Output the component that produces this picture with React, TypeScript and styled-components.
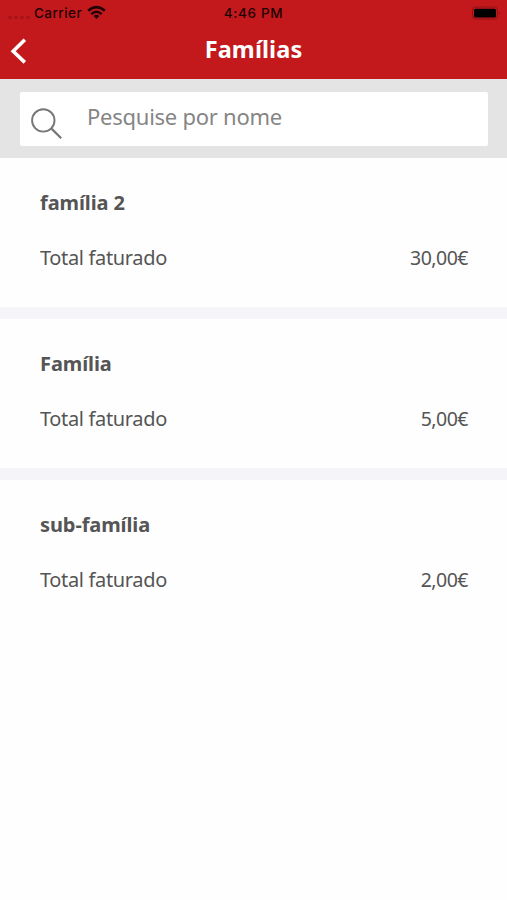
import React from 'react';
import styled, { createGlobalStyle } from 'styled-components';

const GlobalStyle = createGlobalStyle`
  * { box-sizing: border-box; }
  body { margin: 0; background: #fff; font-family: "Noto Sans", "Open Sans", sans-serif; }
  h1, h2, p { margin: 0; }
`;

const Screen = styled.div`
  display: flex;
  flex-direction: column;
  height: 900px;
  background: #fefefe;
  overflow: hidden;
`;

const Header = styled.header`
  height: 79px;
  background: #c3191c;
  flex: none;
`;

const StatusBar = styled.div`
  display: grid;
  grid-template-columns: 1fr auto 1fr;
  align-items: center;
  height: 26px;
  padding: 0 6px 0 8px;
  font: 500 13.5px/26px Inter, sans-serif;
  color: #210305;
`;

const Carrier = styled.div`
  display: flex;
  align-items: center;
  letter-spacing: 0.45px;
`;

const Signal = styled.div`
  display: flex;
  gap: 2px;
  width: 26px;
  padding-top: 9px;
`;

const Dot = styled.span`
  width: 4px;
  height: 3px;
  border-radius: 2px;
  background: #a51518;
`;

const WifiIcon = styled.svg`
  width: 19px;
  height: 15px;
  margin: -1px 0 0 5px;
`;

const Clock = styled.span`
  margin-right: 2px;
  letter-spacing: 0.65px;
`;

const BatteryIcon = styled.svg`
  width: 30px;
  height: 14px;
  justify-self: end;
`;

const TitleBar = styled.div`
  display: grid;
  grid-template-columns: 40px 1fr 40px;
  align-items: center;
  height: 48px;
`;

const BackButton = styled.button`
  display: flex;
  padding: 1px 0 0 10px;
  border: 0;
  background: none;
`;

const Title = styled.h1`
  text-align: center;
  color: #fff;
  font-size: 23.5px;
  line-height: 48px;
  font-weight: 700;
  letter-spacing: 0.1px;
  margin-top: -2px;
`;

const SearchArea = styled.div`
  height: 79px;
  padding: 13px 19px 12px 20px;
  background: #e4e4e4;
  flex: none;
`;

const SearchField = styled.label`
  display: flex;
  height: 54px;
  border-radius: 2px;
  background: #fff;
`;

const SearchIcon = styled.svg`
  width: 34px;
  height: 34px;
  margin: 15px 0 0 10px;
  flex: none;
`;

const SearchInput = styled.input`
  flex: 1;
  min-width: 0;
  height: 48px;
  margin-left: 23px;
  padding: 0;
  border: 0;
  outline: 0;
  background: transparent;
  font: 400 22px/48px "Noto Sans", sans-serif;
  letter-spacing: -0.25px;
  &::placeholder { color: #858585; opacity: 1; }
`;

const List = styled.main`
  display: flex;
  flex-direction: column;
`;

const Card = styled.section`
  height: 161px;
  padding: 30px 39px 0 40px;
  color: #555;
  border-bottom: 12px solid #f4f4f9;
  &:last-child { border-bottom-color: transparent; }
`;

const Name = styled.h2`
  font-size: 20px;
  line-height: 30px;
  font-weight: 700;
  letter-spacing: -0.1px;
`;

const Total = styled.div`
  display: flex;
  justify-content: space-between;
  margin-top: 25px;
  line-height: 30px;
`;

const Label = styled.span`
  font-size: 20px;
  letter-spacing: -0.35px;
`;

const Amount = styled.span`
  font-size: 19.5px;
  letter-spacing: -0.5px;
`;

const families = [
  { name: 'família 2', total: '30,00€' },
  { name: 'Família', total: '5,00€' },
  { name: 'sub-família', total: '2,00€' },
];

export default function App() {
  return (
    <Screen>
      <GlobalStyle />
      <Header>
        <StatusBar>
          <Carrier>
            <Signal><Dot /><Dot /><Dot /><Dot /></Signal>
            Carrier
            <WifiIcon viewBox="0 0 19 15" fill="none" stroke="#210305" strokeWidth="2.6">
              <path d="M1.2 5.8Q9.5 -1.6 17.8 5.8" />
              <path d="M4.3 9.1Q9.5 4.4 14.7 9.1" />
              <path d="M9.5 14L6.6 11Q9.5 8.6 12.4 11Z" fill="#210305" stroke="none" />
            </WifiIcon>
          </Carrier>
          <Clock>4:46 PM</Clock>
          <BatteryIcon viewBox="0 0 30 14">
            <rect x="1.5" y="1" width="25" height="12" rx="3" fill="none" stroke="#8e1214" />
            <rect x="3" y="2.7" width="22" height="8.8" rx="1.5" fill="#000" />
            <path d="M28 5.2Q30 7 28 8.8Z" fill="#8e1214" />
          </BatteryIcon>
        </StatusBar>
        <TitleBar>
          <BackButton aria-label="Voltar">
            <svg width="18" height="26" viewBox="0 0 18 26" fill="none" stroke="#fff" strokeWidth="3.6">
              <path d="M14.8 1.8L3.2 13.2L14.8 24.4" />
            </svg>
          </BackButton>
          <Title>Famílias</Title>
        </TitleBar>
      </Header>
      <SearchArea>
        <SearchField>
          <SearchIcon viewBox="0 0 34 34" fill="none" stroke="#777" strokeWidth="1.9">
            <circle cx="13.3" cy="13.4" r="11.2" />
            <path d="M21.2 21.4L31.2 31.3" strokeWidth="2.2" />
          </SearchIcon>
          <SearchInput placeholder="Pesquise por nome" />
        </SearchField>
      </SearchArea>
      <List>
        {families.map((f) => (
          <Card key={f.name}>
            <Name>{f.name}</Name>
            <Total>
              <Label>Total faturado</Label>
              <Amount>{f.total}</Amount>
            </Total>
          </Card>
        ))}
      </List>
    </Screen>
  );
}
